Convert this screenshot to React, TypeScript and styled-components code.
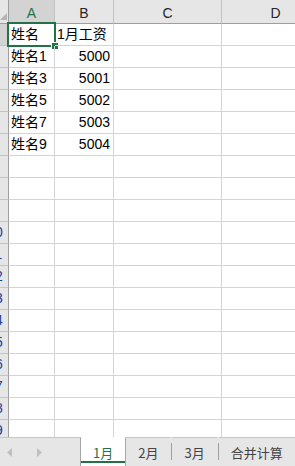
import styled, { createGlobalStyle } from "styled-components";

const GlobalStyle = createGlobalStyle`
  html, body {
    margin: 0;
    padding: 0;
    background: #ffffff;
  }
  body {
    font-family: "Liberation Sans", "Noto Sans CJK SC", sans-serif;
  }
`;

const GREEN = "#217346";

const cols = ["A", "B", "C", "D"];
const data: [string, string][] = [
  ["姓名", "1月工资"],
  ["姓名1", "5000"],
  ["姓名3", "5001"],
  ["姓名5", "5002"],
  ["姓名7", "5003"],
  ["姓名9", "5004"],
];
const sheets = ["1月", "2月", "3月", "合并计算"];

const Window = styled.div`
  width: 295px;
  height: 466px;
  display: flex;
  flex-direction: column;
  overflow: hidden;
  background: #fff;
`;

const Grid = styled.div`
  height: 437px;
  flex: none;
  display: grid;
  grid-template-columns: 9px 46px 59px 108px 108px;
  grid-template-rows: 24px;
  grid-auto-rows: 22px;
  overflow: hidden;
  font-size: 14px;
  color: #000;
`;

const Corner = styled.div`
  box-sizing: border-box;
  background: #e6e6e6;
  border-right: 1px solid #9e9e9e;
  border-bottom: 1px solid #9e9e9e;
  display: flex;
  align-items: flex-end;
  padding-bottom: 3px;
`;

const ColHead = styled.div<{ $active?: boolean }>`
  box-sizing: border-box;
  background: ${(p) => (p.$active ? "#d3d3d3" : "#e6e6e6")};
  color: ${(p) => (p.$active ? GREEN : "#262626")};
  border-right: 1px solid #c4c4c4;
  border-bottom: 1px solid #9e9e9e;
  display: flex;
  align-items: center;
  justify-content: center;
  padding-top: 2px;
  font-size: 14px;
`;

const RowHead = styled.div<{ $active?: boolean }>`
  box-sizing: border-box;
  background: ${(p) => (p.$active ? "#d3d3d3" : "#e6e6e6")};
  border-right: 1px solid #9e9e9e;
  border-bottom: 1px solid #c4c4c4;
  overflow: hidden;
  color: #1a3d9c;
  line-height: 21px;
`;

// the row numbers sit mostly left of the window edge, only a sliver shows
const RowNum = styled.span`
  display: block;
  width: 26px;
  margin-left: -18px;
  text-align: center;
`;

const Cell = styled.div<{ $num?: boolean }>`
  position: relative;
  box-sizing: border-box;
  border-right: 1px solid #d4d4d4;
  border-bottom: 1px solid #d4d4d4;
  padding: 0 ${(p) => (p.$num ? "3px" : "2px")};
  text-align: ${(p) => (p.$num ? "right" : "left")};
  line-height: 21px;
  white-space: nowrap;
`;

const Selection = styled.div`
  position: absolute;
  left: -2px;
  top: -2px;
  right: -2px;
  bottom: -2px;
  border: 2px solid ${GREEN};
  pointer-events: none;
`;

const Handle = styled.div`
  position: absolute;
  right: -5px;
  bottom: -5px;
  box-sizing: border-box;
  width: 8px;
  height: 8px;
  background: ${GREEN};
  border: 1px solid #fff;
`;

const TabBar = styled.div`
  flex: 1;
  display: flex;
  align-items: stretch;
  background: #e6e6e6;
  font-family: "Noto Sans CJK SC", "Liberation Sans", sans-serif;
  font-size: 13px;
`;

const NavArea = styled.div`
  flex: none;
  width: 81px;
  box-sizing: border-box;
  border-top: 1px solid #c6c6c6;
  border-right: 1px solid #a6a6a6;
  display: flex;
  align-items: center;
  padding-left: 7px;
  gap: 25px;
`;

const Tab = styled.div<{ $active?: boolean }>`
  position: relative;
  flex: none;
  box-sizing: border-box;
  display: flex;
  align-items: center;
  justify-content: center;
  padding: 0 12px;
  white-space: nowrap;
  background: ${(p) => (p.$active ? "#fff" : "transparent")};
  color: ${(p) => (p.$active ? GREEN : "#444")};
  border-top: 1px solid ${(p) => (p.$active ? "#fff" : "#c6c6c6")};
  border-right: 1px solid ${(p) => (p.$active ? "#a6a6a6" : "transparent")};
  &::after {
    content: "";
    display: ${(p) => (p.$active ? "block" : "none")};
    position: absolute;
    left: 0;
    right: 0;
    bottom: 3px;
    height: 2px;
    background: ${GREEN};
  }
`;

const TabSep = styled.div`
  flex: none;
  width: 1px;
  height: 17px;
  align-self: center;
  background: #a0a0a0;
`;

const TabFill = styled.div`
  flex: 1;
  border-top: 1px solid #c6c6c6;
`;

const Arrow = ({ dir }: { dir: "left" | "right" }) => (
  <svg width="5" height="9" viewBox="0 0 5 9">
    <polygon points={dir === "left" ? "5,0 0,4.5 5,9" : "0,0 5,4.5 0,9"} fill="#bfbfbf" />
  </svg>
);

export default function App() {
  const rows = Array.from({ length: 19 }, (_, i) => i + 1);
  return (
    <>
      <GlobalStyle />
      <Window>
        <Grid>
          <Corner>
            <svg width="8" height="9" viewBox="0 0 8 9">
              <polygon points="0,9 7,2 7,9" fill="#b4b4b4" />
            </svg>
          </Corner>
          {cols.map((c, i) => (
            <ColHead key={c} $active={i === 0}>
              {c}
            </ColHead>
          ))}
          {rows.map((r) => {
            const row = data[r - 1];
            return [
              <RowHead key={`h${r}`} $active={r === 1}>
                <RowNum>{r}</RowNum>
              </RowHead>,
              <Cell key={`a${r}`}>
                {row ? row[0] : ""}
                {r === 1 && (
                  <Selection>
                    <Handle />
                  </Selection>
                )}
              </Cell>,
              <Cell key={`b${r}`} $num={!!row && /^\d+$/.test(row[1])}>
                {row ? row[1] : ""}
              </Cell>,
              <Cell key={`c${r}`} />,
              <Cell key={`d${r}`} />,
            ];
          })}
        </Grid>
        <TabBar>
          <NavArea>
            <Arrow dir="left" />
            <Arrow dir="right" />
          </NavArea>
          {sheets.map((s, i) => [
            <Tab key={s} $active={i === 0}>
              {s}
            </Tab>,
            i > 0 ? <TabSep key={`s${s}`} /> : null,
          ])}
          <TabFill />
        </TabBar>
      </Window>
    </>
  );
}
